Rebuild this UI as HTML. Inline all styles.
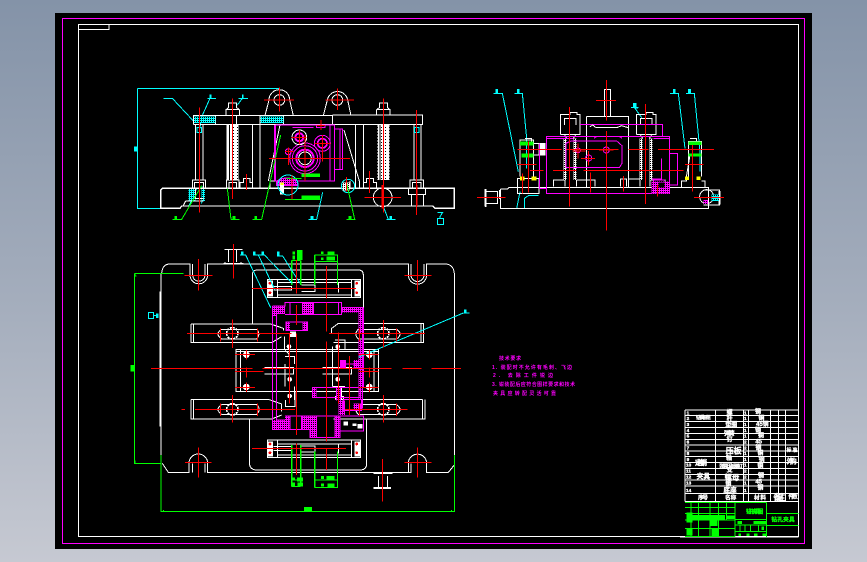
<!DOCTYPE html>
<html><head><meta charset="utf-8"><style>
html,body{margin:0;padding:0;width:867px;height:562px;overflow:hidden;background:linear-gradient(180deg,#8493a8 0%,#a5aebd 55%,#c6c9d2 100%)}
svg{position:absolute;left:0;top:0}
text{font-family:"Liberation Sans","Noto Sans CJK SC",sans-serif;font-weight:700;stroke-width:1}
.w{stroke:#fff;fill:none;stroke-width:3}.m{stroke:#f0f;fill:none;stroke-width:3}.r{stroke:#f00;fill:none;stroke-width:3}.c{stroke:#0ff;fill:none;stroke-width:3}.g{stroke:#0f0;fill:none;stroke-width:3}
</style></head><body>
<svg width="867" height="562" viewBox="0 0 867 562" shape-rendering="crispEdges">
<defs>
<pattern id="hm" width="6" height="6" patternUnits="userSpaceOnUse"><rect width="6" height="6" fill="#f0f"/><rect width="3" height="3" fill="#000"/></pattern>
<pattern id="hc" width="6" height="6" patternUnits="userSpaceOnUse"><rect width="6" height="6" fill="#0ff"/><rect width="3" height="3" fill="#000"/></pattern>
<pattern id="hw" width="6" height="6" patternUnits="userSpaceOnUse"><rect width="6" height="6" fill="#fff"/><rect width="3" height="3" fill="#000"/></pattern>
<pattern id="sp" width="12" height="9" patternUnits="userSpaceOnUse"><rect width="12" height="9" fill="#fff"/><rect x="3" y="3" width="3" height="3" fill="#000"/></pattern>
</defs>
<rect x="55" y="13" width="757" height="536" fill="#000"/>
<path d="M62.5 18.5H804.5V543.5H62.5Z" fill="none" stroke="#f0f" stroke-width="1"/>
<path d="M78.5 24.5H798.5V536.5H78.5Z M78.5 29.5H109V24.5" fill="none" stroke="#fff" stroke-width="1"/>

<!-- FRONT VIEW -->
<g transform="translate(120 75) scale(.33333)">
<g class="c"><path d="M52 41H478 M52 41V400H155"/><rect x="43" y="216" width="9" height="12" fill="#0ff"/>
<path d="M130 70H157L222 140 M262 70H288M270 58V70L243 130L240 160 M355 70H384M367 58V70L352 90"/>
<path d="M230 340L206 395M250 330L245 385"/>
<path d="M565 433H590L608 352 M800 433H826M805 433L786 385 M952 412H968L960 425V430M952 430H970V448H952Z"/></g>
<rect x="205" y="342" width="22" height="36" fill="url(#hc)"/><rect x="245" y="338" width="10" height="40" fill="url(#hc)"/>
<g class="w">
<path d="M220 148V122H637V148 M637 120H907V148H220 M287 122V148M350 122V148M420 122V148M490 122V148"/>
<path d="M435 122L447 75A31 31 0 0 1 509 75L520 122 M610 122L622 75A31 31 0 0 1 683 75L693 122"/>
<circle cx="478" cy="75" r="16"/><circle cx="652" cy="75" r="16"/>
<path d="M227 148V315M249 148V315M397 148V338M420 148V338M706 148V338M730 148V338M882 148V315M903 148V315"/>
<path d="M318 122V104L326 98V84H350V98L358 104V122M318 104H358 M770 122V104L778 98V84H802V98L810 104V122M770 104H810"/>
<path d="M217 338V315H257V338M224 338V322H250V338M320 338V315H357V338M327 338V322H350V338 M870 338V315H910V338M877 338V322H903V338"/>
<path d="M360 338V322H370V310H390V322H398V338 M730 338V322H740V310H760V322H770V338"/>
<path d="M122 400V345L127 340H1003V400H945L938 393H185L180 400Z" stroke-width="4"/>
<path d="M465 150H480L445 318 M672 165L718 318V338 M450 338V318H470 M690 338V318 M865 340V358H917V340 M875 358V393M910 358V393M197 378H250M197 378L190 392 M227 338V370H250"/>
<path d="M122 345V400" stroke-width="5"/>
<circle cx="788" cy="367" r="28"/></g>
<rect x="222" y="124" width="65" height="20" fill="url(#hc)"/><rect x="422" y="124" width="68" height="20" fill="url(#hc)"/>
<rect x="320" y="150" width="36" height="165" fill="url(#sp)"/><rect x="772" y="150" width="36" height="165" fill="url(#sp)"/>
<rect x="327" y="150" width="3" height="165" fill="#000"/><rect x="779" y="150" width="3" height="165" fill="#000"/>
<rect x="231" y="158" width="14" height="14" fill="none" stroke="#0ff" stroke-width="3"/><rect x="883" y="158" width="14" height="14" fill="none" stroke="#0ff" stroke-width="3"/>
<g class="m">
<path d="M463 150V318M467 150H643V318H467V150 M630 150V318 M643 162H668V283H643 M660 162V283 M518 157H580 M590 150V158H615V150"/>
<circle cx="555" cy="250" r="46"/><circle cx="555" cy="250" r="38"/><circle cx="555" cy="250" r="26" stroke-width="6"/>
<circle cx="538" cy="187" r="12" stroke-width="6"/><circle cx="607" cy="205" r="24"/><circle cx="607" cy="205" r="14" stroke-width="5"/><circle cx="505" cy="230" r="9"/>
<path d="M470 318Q500 300 533 318V332H470Z" fill="url(#hm)"/></g>
<circle cx="538" cy="187" r="22" class="w"/><circle cx="555" cy="250" r="19" class="w"/>
<rect x="480" y="322" width="12" height="36" fill="#fff"/><rect x="482" y="322" width="8" height="8" fill="#ff0"/>
<circle cx="684" cy="333" r="20" class="c"/><rect x="668" y="322" width="20" height="24" fill="url(#hw)"/><circle cx="504" cy="330" r="30" class="c"/>
<g class="g"><path d="M157 433H185L245 332 M333 433H358M333 433L322 340 M397 433H425L482 180 M680 433H707M704 433L680 325 M495 373H600 M516 300V373 M500 310H545"/></g>
<g fill="#0f0" stroke="none"><rect x="163" y="423" width="8" height="9"/><rect x="338" y="423" width="8" height="9"/><rect x="403" y="423" width="8" height="9"/><rect x="686" y="423" width="8" height="9"/><rect x="544" y="296" width="56" height="10"/><rect x="544" y="361" width="56" height="11"/></g>
<g fill="#0ff" stroke="none"><rect x="572" y="423" width="8" height="9"/><rect x="808" y="423" width="8" height="9"/><rect x="270" y="58" width="5" height="11"/><rect x="366" y="58" width="5" height="11"/></g>
<g class="r"><path d="M238 97V413M338 70V372M380 297V345M748 288V354M790 70V413M889 105V420M733 367H843M432 75H522M478 38V110M617 75H702M652 40V105"/>
<path d="M447 250H690M555 180V318M515 187H560M538 165V208M583 205H632M607 180V260M495 230H520M505 218V270M603 135V165M590 152H615M680 306V350M516 300V373"/><path d="M788 330V400" stroke-width="6"/><path d="M890 330V393" stroke-width="4"/></g>
</g>

<!-- SIDE VIEW -->
<g transform="translate(470 75) scale(.33333)">
<g class="c"><path d="M70 55H97L145 290 M133 55H157L170 190V280 M600 55H625L645 220 M648 55H673L690 230V290 M483 98H505L495 100L515 128M140 400L150 350M163 400V370L175 362H205"/><path d="M78 43h5v12h-5zM142 43h5v12h-5zM610 43h5v12h-5zM656 43h5v12h-5zM491 85h7v13h-7z" fill="#0ff"/></g>
<g class="w">
<path d="M92 342H112L118 337H715V400H92V342 M88 345V372 M45 342V395M45 350H82V385H45"/>
<path d="M403 124V43H421V124 M349 124H476V338M349 124V338"/>
<path d="M271 178V119H300V112H321V119H330V178H271M283 150V130H318V150M499 178V119H528V112H549V119H558V178H499M511 150V130H546V150 M283 178L290 190M318 178L310 190M510 178L518 190M546 178L538 190"/>
<path d="M250 335V315H285V335M320 335V315H375V335M475 335V312H510V335M540 335V315H585V335M451 335V312H470V335"/>
<path d="M150 305V195H190V305M165 190H185V200M655 305V200H695V305M660 190H680V200M192 205H225V240H192 M142 310H207V355H142Z M635 336V318H650V300L660 240M705 336V318H695"/>
<path d="M700 345H748V390H700"/><circle cx="710" cy="365" r="21"/><path d="M748 348V388" stroke-width="6"/>
</g>
<rect x="45" y="342" width="5" height="54" fill="#fff"/>
<rect x="280" y="190" width="10" height="125" fill="url(#hw)"/><rect x="310" y="190" width="10" height="125" fill="url(#hw)"/><rect x="508" y="190" width="10" height="125" fill="url(#hw)"/><rect x="538" y="190" width="10" height="125" fill="url(#hw)"/>
<rect x="205" y="205" width="18" height="35" fill="#fff"/>
<g fill="#0f0" stroke="none"><rect x="150" y="200" width="40" height="12"/><rect x="155" y="235" width="36" height="12"/><rect x="655" y="200" width="40" height="10"/><rect x="655" y="235" width="40" height="10"/></g>
<g fill="#ff0" stroke="none"><rect x="150" y="305" width="14" height="12"/><rect x="185" y="305" width="14" height="12"/><rect x="645" y="305" width="12" height="10"/><rect x="680" y="305" width="12" height="10"/></g>
<rect x="725" y="358" width="22" height="20" fill="url(#hc)"/><rect x="700" y="375" width="14" height="12" fill="url(#hm)"/>
<g class="m">
<path d="M229 184H598V356H229Z M229 190H310M550 190H598 M330 148H577V184M575 250V312H545 M598 235H622V330H598 M208 205V340H229"/>
<path d="M288 278V205L303 198H440L456 212V265L448 278H288Z M372 190L380 184H448L456 190"/>
<circle cx="324" cy="226" r="7"/><circle cx="356" cy="249" r="9"/><circle cx="409" cy="225" r="9"/>
<path d="M550 325V315H585" /></g>
<rect x="545" y="320" width="55" height="35" fill="url(#hm)"/><rect x="565" y="322" width="18" height="16" fill="#000"/>
<g class="w"><path d="M360 155L368 150L378 158H440L455 152L474 158"/></g>
<g class="r"><path d="M409 15V137M378 76H438M409 168V467M298 96V395M526 87V387M175 200V352M157 296V356M667 210V350M142 223H275M290 223H445M475 223H535M564 223H732M249 286H320M340 286H640M143 268H200M645 268H700M180 286H220M324 205V250M307 228H346M333 250H375M355 228V272M387 225H430M361 293V353M461 303V350M562 330V365M21 367H107M672 367H762"/></g>
</g>

<!-- PLAN VIEW -->
<g transform="translate(125 240) scale(.33333)">
<g class="w">
<path d="M110 100Q112 72 135 72H195V105A26 26 0 0 0 248 105V72H850V105A26 26 0 0 0 905 105V72H960Q985 72 988 100V645"/>
<path d="M203 72V105A18 18 0 0 0 240 105V72M858 72V105A18 18 0 0 0 897 105V72"/>
<path d="M108 100V645M112 670L130 697H192V670A28 28 0 0 1 248 670V697H860M240 697V670M203 697V670 M850 697V670A27 27 0 0 1 905 670V697H970L988 675 M858 697V670"/>
<path d="M106 155V560" stroke-width="4"/>
<path d="M382 250V105Q382 90 397 90H700Q715 90 715 105V250 M373 535V670Q375 690 395 690H705Q725 690 725 670V535"/>
<rect x="333" y="328" width="427" height="126"/><path d="M346 328V454M747 328V454M333 334H760"/>
<path d="M198 252H437L475 265V272 M205 252V308M198 252V308H440L470 290"/>
<path d="M620 280V265L640 250H895V308H625M888 250V308"/>
<path d="M198 478H430L470 492V515M205 478V537M198 478V537H440L470 525 M893 478V537M900 478V537H625M640 478H893"/>
<path d="M290 268H395Q408 282 395 297H290Q268 282 290 268M700 268H815Q835 282 815 297H700Q685 282 700 268"/>
<path d="M290 494H395Q410 508 395 523H290Q268 508 290 494M700 494H815Q835 508 815 523H700Q685 508 700 494"/>
<circle cx="322" cy="280" r="17" stroke-dasharray="6 3" stroke-width="5"/><circle cx="775" cy="280" r="17" stroke-dasharray="6 3" stroke-width="5"/>
<circle cx="322" cy="508" r="17" stroke-dasharray="6 3" stroke-width="5"/><circle cx="775" cy="508" r="17" stroke-dasharray="6 3" stroke-width="5"/>
<rect x="428" y="118" width="278" height="54"/><path d="M445 140H500V150H445M530 135H570V155H530M640 128V158M458 118V172M680 118V172M458 128H680M458 165H680"/>
<rect x="428" y="600" width="278" height="52"/><path d="M445 620H500V632H445M530 618H570V636H530M640 610V640M458 600V652M680 600V652M458 612H680M458 645H680"/>
<path d="M298 28H353M310 28V66M335 28V66M295 70H355M300 66V70M348 66V70"/>
<path d="M745 700H803M760 708V742M788 708V742"/><path d="M745 744H798" stroke-width="5"/>
<path d="M418 382H505V402H418M592 382H680V402H592"/>
<path d="M478 290V330M480 332Q495 340 492 350M480 350H508V372M480 372V440M508 440V480M510 455V500H482V480M630 300H660V330M622 320V440M650 440V480M622 440H660 M630 470H655V500"/>
</g>
<g fill="#fff" stroke="none"><rect x="428" y="122" width="16" height="48"/><rect x="688" y="122" width="17" height="48"/><rect x="428" y="604" width="16" height="46"/><rect x="688" y="604" width="17" height="46"/><circle cx="364" cy="344" r="10"/><circle cx="733" cy="344" r="10"/><circle cx="364" cy="441" r="10"/><circle cx="733" cy="441" r="10"/><circle cx="492" cy="320" r="7"/><circle cx="494" cy="418" r="7"/><circle cx="494" cy="468" r="7"/><circle cx="638" cy="320" r="7"/><circle cx="638" cy="418" r="7"/><circle cx="636" cy="475" r="6"/><rect x="655" y="545" width="14" height="12"/><rect x="683" y="550" width="12" height="8"/><rect x="698" y="552" width="14" height="14"/><rect x="495" y="275" width="18" height="16"/></g>
<g fill="#f00" stroke="none"><circle cx="435" cy="130" r="4"/><circle cx="435" cy="158" r="4"/><circle cx="695" cy="130" r="4"/><circle cx="695" cy="158" r="4"/><circle cx="435" cy="612" r="4"/><circle cx="435" cy="638" r="4"/><circle cx="695" cy="612" r="4"/><circle cx="695" cy="638" r="4"/></g>
<g stroke="none" fill="url(#hm)">
<path d="M442 198H480V222H455V228H442Z"/><rect x="532" y="188" width="33" height="34"/><path d="M650 204H712V218H650Z"/><rect x="700" y="218" width="12" height="62"/><rect x="700" y="300" width="12" height="60"/><rect x="685" y="360" width="30" height="24"/><rect x="700" y="384" width="15" height="58"/>
<rect x="483" y="248" width="12" height="24"/><rect x="533" y="248" width="14" height="24"/>
<rect x="562" y="442" width="13" height="30"/><rect x="633" y="442" width="15" height="40"/><rect x="640" y="482" width="20" height="43"/><rect x="700" y="442" width="10" height="36"/><rect x="685" y="490" width="25" height="22"/>
<rect x="442" y="540" width="53" height="28"/><rect x="480" y="528" width="15" height="12"/><rect x="530" y="530" width="45" height="40"/><rect x="555" y="570" width="20" height="22"/><rect x="630" y="528" width="17" height="64"/>
</g>
<g class="m">
<path d="M442 198V568H480 M455 222V540H480 M442 198H480V187H650V203H712V505 M480 223H650V203 M495 187V223M532 187V223M565 187V223M640 187V223M715 203V442"/>
<path d="M483 246H547V272H483Z"/>
<path d="M663 372H700 M562 442H705V472H562Z"/>
<path d="M655 478H710V512H655Z"/>
<path d="M480 528H645V592H555V568H442M495 528V568M530 528V568M575 528V592M630 528V592"/>
<path d="M647 528H715V573H647"/>
</g>
<rect x="645" y="360" width="18" height="24" fill="#f0f"/>
<g class="g">
<path d="M28 100H175M28 100V670H108M30 100V108H34M30 662V670M108 645V814H988V645M115 810V814M980 810V814"/>
<path d="M499 62H527M568 45H638V135M568 65H638"/><path d="M500 62V135M527 62V135M569 45V135" stroke-width="5"/>
<path d="M499 740H527M568 742H638V635M568 720H638M499 720H527"/><path d="M500 615V740M527 615V740M569 635V742" stroke-width="5"/>
</g>
<g fill="#0f0" stroke="none"><rect x="16" y="375" width="12" height="20"/><rect x="537" y="801" width="24" height="12"/>
<rect x="502" y="35" width="8" height="8"/><rect x="516" y="30" width="16" height="30"/><rect x="502" y="47" width="8" height="12"/><rect x="588" y="34" width="8" height="8"/><rect x="608" y="34" width="20" height="12"/><rect x="588" y="52" width="8" height="8"/><rect x="604" y="50" width="26" height="12"/>
<rect x="502" y="712" width="8" height="8"/><rect x="516" y="712" width="18" height="12"/><rect x="502" y="728" width="8" height="10"/><rect x="518" y="728" width="16" height="12"/><rect x="588" y="708" width="9" height="9"/><rect x="604" y="708" width="24" height="12"/><rect x="588" y="730" width="9" height="9"/><rect x="608" y="730" width="20" height="12"/></g>
<g class="c">
<path d="M345 45H362L437 203 M384 45H418L502 130 M400 45L450 150M456 48H473L525 130 M1015 219H1034M1015 219L700 352 M70 218H86V236H70ZM86 227H100"/>
</g>
<g fill="#0ff" stroke="none"><rect x="348" y="34" width="8" height="12"/><rect x="384" y="34" width="8" height="12"/><rect x="410" y="34" width="7" height="12"/><rect x="456" y="34" width="8" height="12"/><rect x="1017" y="208" width="8" height="11"/><rect x="93" y="220" width="8" height="14"/></g>
<g class="r">
<path d="M325 12V116M220 57V152M178 106H262M877 60V153M838 106H920"/>
<path d="M381 145H693M514 60V160M604 78V175M514 195V255M604 188V275M604 305V605"/>
<path d="M78 385H383M412 385H800M832 385H890M920 385H1008"/>
<path d="M322 238V324M186 280H500M286 265V304M397 265V304M775 240V322M612 280H900M814 265V304M703 265V304"/>
<path d="M322 465V548M170 508H180M210 508H510M286 490V528M397 490V528M775 465V548M660 508H848M814 490V528M703 490V528"/>
<path d="M364 330V358M364 382V412M364 428V456M330 344H390M330 394H415M330 442H390M733 330V358M733 382V412M733 428V456M700 344H760M700 394H760M700 442H760"/>
<path d="M493 280V490M514 280V585M641 278V490M673 348V525"/>
<path d="M381 625H663M514 610V705M604 625V690M220 622V713M180 667H260M877 622V713M838 667H920M772 657V785"/>
</g>
</g>

<!-- NOTES -->
<g fill="#f0f" font-size="5">
<text x="499" y="360" textLength="22">技术要求</text>
<text x="492" y="369" textLength="80">1. 装配时不允许有毛刺、飞边</text>
<text x="493" y="377" textLength="60">2. 去除工件锐边</text>
<text x="492" y="386" textLength="83">3. 钳装配后应符合图样要求和技术</text>
<text x="493" y="395" textLength="63">夹具应转配灵活可靠</text>
</g>

<!-- TITLE BLOCK -->
<g transform="translate(680 400) scale(.33333)">
<g class="w">
<path d="M15 30H355M15 47H355M15 65H355M15 83H355M15 100H355M15 118H355M15 135H355M15 153H355M15 170H355M15 188H355M15 205H355M15 223H355M15 240H355M15 258H355M15 280H355M15 305H355"/>
<path d="M15 30V305M107 30V305M190 30V305M205 30V305M272 30V305M296 30V280M317 30V305"/>
<path d="M0 411H355"/>
</g>
<g fill="#fff" stroke="#fff">
<g font-size="14">
<text x="48" y="57" textLength="44">钻模板组</text>
<text x="45" y="195" textLength="36" font-size="20">定位销</text>
<text x="50" y="235" textLength="40" font-size="20">夹具</text>
<text x="118" y="202" textLength="70">弹簧压板螺钉</text>
<text x="320" y="155" textLength="32">标准</text>
<text x="320" y="190" textLength="30" font-size="20">外购</text>
</g>
<g font-size="18">
<text x="140" y="44">螺</text><text x="140" y="62">杆</text><text x="136" y="80">垫圈</text><text x="132" y="107" textLength="32">弹簧</text><text x="140" y="125">钉</text><text x="137" y="160" font-size="24">压板</text><text x="138" y="180">轴</text><text x="140" y="216">支</text><text x="134" y="240" font-size="22">螺母</text><text x="136" y="258">销</text><text x="130" y="278" font-size="20">底座</text>
<text x="225" y="40">钢</text><text x="235" y="60">铜</text><text x="228" y="78">45钢</text><text x="225" y="96">钢</text><text x="234" y="112">铜</text><text x="226" y="130">45</text><text x="226" y="148">钢</text><text x="232" y="165">铜</text><text x="236" y="184">钢</text><text x="232" y="204">铜</text><text x="234" y="232">钢</text><text x="226" y="250">45</text><text x="232" y="268">钢</text>
</g>
<g font-size="14"><text x="20" y="44">1</text><text x="20" y="60">2</text><text x="20" y="78">3</text><text x="20" y="96">4</text><text x="20" y="113">5</text><text x="20" y="130">6</text><text x="20" y="148">7</text><text x="20" y="165">8</text><text x="20" y="183">9</text><text x="18" y="200">10</text><text x="18" y="218">11</text><text x="18" y="236">12</text><text x="18" y="254">13</text><text x="18" y="276">14</text>
<text x="192" y="44">1</text><text x="192" y="60">1</text><text x="192" y="78">1</text><text x="192" y="96">1</text><text x="192" y="113">1</text><text x="192" y="130">2</text><text x="192" y="148">2</text><text x="192" y="165">1</text><text x="192" y="183">1</text><text x="192" y="200">1</text><text x="192" y="218">2</text><text x="192" y="236">2</text><text x="192" y="254">1</text><text x="192" y="276">1</text></g>
<g font-size="17"><text x="54" y="298" textLength="30">序号</text><text x="135" y="298" textLength="34">名称</text><text x="222" y="298" textLength="36">材料</text><text x="280" y="302" font-size="26" textLength="35">备注</text><text x="325" y="296" textLength="28">件数</text></g>
</g>
<g class="g">
<path d="M15 308H260M15 322H165M15 340H165M15 360H165M15 385H165M15 410H165M33 308V410M55 308V410M90 308V410M115 308V410M140 308V360M165 308V410"/>
<path d="M165 358H260M165 375H260M165 395H260M260 308V411M260 340H355M260 377H355M180 375V395M195 375V395M212 375V395M235 375V395"/>
</g>
<g fill="#0f0" stroke="none"><rect x="20" y="338" width="18" height="30"/><rect x="35" y="345" width="100" height="13"/><rect x="90" y="358" width="22" height="20"/><rect x="138" y="347" width="25" height="10"/><rect x="20" y="385" width="18" height="22"/><rect x="95" y="384" width="20" height="24"/><rect x="172" y="363" width="14" height="9"/><rect x="220" y="363" width="38" height="9"/><rect x="175" y="400" width="8" height="8"/><rect x="200" y="400" width="8" height="8"/><rect x="222" y="400" width="10" height="8"/><rect x="248" y="400" width="10" height="8"/><rect x="244" y="380" width="8" height="10"/></g>
<text x="198" y="340" fill="#0f0" stroke="#0f0" font-size="17" textLength="52" stroke-width="3">钻孔夹具图</text>
<text x="274" y="365" fill="#0f0" stroke="#0f0" font-size="17" textLength="70" stroke-width="2">钻孔夹具</text>
</g>
</svg>
</body></html>
